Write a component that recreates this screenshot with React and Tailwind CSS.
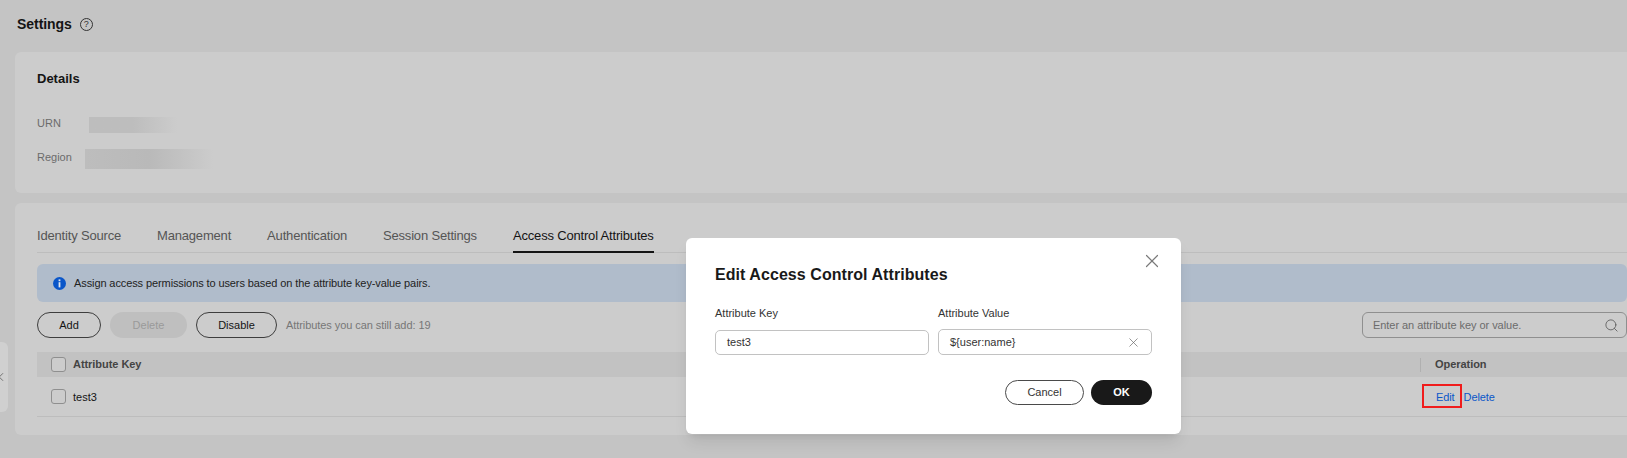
import { Search, X, ChevronLeft } from "lucide-react";

const tabs = ["Identity Source", "Management", "Authentication", "Session Settings"];

function Checkbox() {
  return <span className="w-[15px] h-[15px] rounded-[3px] border border-[#8f8f8f] bg-[#cccccc]" />;
}

function PillButton({ children, className }) {
  return (
    <button className={`h-[26px] rounded-full border border-[#3d3d3d] text-[11px] text-[#141414] ${className}`}>
      {children}
    </button>
  );
}

function InfoIcon() {
  return (
    <svg width="13" height="13" viewBox="0 0 13 13">
      <circle cx="6.5" cy="6.5" r="6.5" fill="#0a56c9" />
      <rect x="5.6" y="2.4" width="1.8" height="1.8" fill="#dfe6ef" />
      <rect x="5.6" y="5.2" width="1.8" height="5.2" fill="#dfe6ef" />
    </svg>
  );
}

function EditDialog() {
  return (
    <div className="absolute left-[686px] top-[238px] w-[495px] h-[196px] bg-white rounded-[6px] px-[29px] pt-[28px] shadow-lg">
      <button className="absolute right-[18px] top-[12px] text-[#7a7a7a]">
        <X size={22} strokeWidth={1.3} />
      </button>
      <h3 className="text-base leading-[18px] font-bold text-[#191919] tracking-[0.06px]">Edit Access Control Attributes</h3>
      <div className="flex gap-[9px] mt-[22px]">
        <div className="w-[214px]">
          <div className="text-[11px] leading-[14px] text-[#333333]">Attribute Key</div>
          <div className="mt-[10px] h-[25px] flex items-center pl-[11px] pr-[12px] border border-[#c2c2c2] rounded-[5px] text-[11px] text-[#333333]">
            test3
          </div>
        </div>
        <div className="w-[214px]">
          <div className="text-[11px] leading-[14px] text-[#333333]">Attribute Value</div>
          <div className="mt-[9px] h-[26px] flex items-center justify-between pl-[11px] pr-[10px] border border-[#c2c2c2] rounded-[5px] text-[11px] text-[#333333]">
            <span>{"${user:name}"}</span>
            <X size={15} strokeWidth={1.1} className="text-[#666666]" />
          </div>
        </div>
      </div>
      <div className="flex justify-end gap-[7px] mt-[25px]">
        <button className="w-[79px] h-[25px] rounded-full border border-[#4a4a4a] text-[11px] text-[#333333]">Cancel</button>
        <button className="w-[61px] h-[25px] rounded-full bg-[#191919] text-[11px] font-bold text-white">OK</button>
      </div>
    </div>
  );
}

export default function App() {
  return (
    <div className="relative w-[1627px] h-[458px] overflow-hidden bg-[#c4c4c4] font-['Liberation_Sans',Arial,sans-serif] text-[#141414]">
      <div className="pl-[17px] h-[52px] pt-[16px] flex items-start gap-[8px]">
        <span className="text-sm leading-4 font-bold tracking-[-0.05px]">Settings</span>
        <span className="mt-[2px] w-[13px] h-[13px] rounded-full border border-[#333333] flex items-center justify-center text-[9px] leading-none text-[#333333]">?</span>
      </div>

      {/* Details */}
      <div className="ml-[15px] w-[1640px] h-[141px] bg-[#cccccc] rounded-[6px] pl-[22px] pt-[19px]">
        <div className="text-[13px] leading-[16px] font-bold">Details</div>
        <div className="flex items-center mt-[30px] h-[16px]">
          <span className="w-[52px] text-[11px] leading-[12px] -mt-[4px] text-[#6b6b6b]">URN</span>
          <span className="w-[88px] h-[16px] bg-gradient-to-r from-[#bdbdbd] via-[#bdbdbd] to-[#cccccc]" />
        </div>
        <div className="flex items-center mt-[16px] h-[20px]">
          <span className="w-[48px] text-[11px] leading-[12px] -mt-[4px] text-[#6b6b6b]">Region</span>
          <span className="w-[128px] h-[20px] bg-gradient-to-r from-[#bdbdbd] via-[#b9b9b9] to-[#cccccc]" />
        </div>
      </div>

      {/* Tabs and table */}
      <div className="ml-[15px] mt-[10px] w-[1640px] h-[232px] bg-[#cccccc] rounded-[6px] pl-[22px] pr-[28px] pt-[20px]">
        <div className="flex h-[30px] border-b border-[#bdbdbd] text-[13px] text-[#555555]">
          {tabs.map((tab) => (
            <span key={tab} className="mr-[36px] leading-[26px] tracking-[-0.18px]">{tab}</span>
          ))}
          <span className="h-[30px] leading-[26px] tracking-[-0.18px] text-[#141414] border-b-2 border-[#141414]">
            Access Control Attributes
          </span>
        </div>

        <div className="mt-[11px] h-[38px] bg-[#b0bccb] rounded-[6px] flex items-center pl-[16px] gap-[8px] text-[11px] text-[#222222]">
          <InfoIcon />
          <span className="tracking-[-0.1px]">Assign access permissions to users based on the attribute key-value pairs.</span>
        </div>

        <div className="mt-[10px] flex items-center">
          <PillButton className="w-[64px]">Add</PillButton>
          <button className="ml-[9px] w-[77px] h-[26px] rounded-full bg-[#bfbfbf] text-[11px] text-[#9a9a9a]">Delete</button>
          <PillButton className="ml-[9px] w-[81px]">Disable</PillButton>
          <span className="ml-[9px] text-[11px] text-[#777777] tracking-[-0.07px]">Attributes you can still add: 19</span>
          <div className="ml-auto w-[265px] h-[26px] border border-[#8f8f8f] rounded-[6px] flex items-center justify-between pl-[10px] pr-[7px] text-[11px] text-[#6b6b6b]">
            <span className="tracking-[-0.05px]">Enter an attribute key or value.</span>
            <Search size={15} strokeWidth={1.3} className="text-[#555555]" />
          </div>
        </div>

        <div className="mt-[14px] h-[25px] bg-[#c2c2c2] flex items-center pl-[14px] text-[11px] font-bold text-[#444444]">
          <Checkbox />
          <span className="ml-[7px] tracking-[-0.05px]">Attribute Key</span>
          <span className="ml-auto w-px h-[14px] bg-[#b0b0b0]" />
          <span className="ml-[14px] w-[192px] tracking-[-0.05px]">Operation</span>
        </div>
        <div className="h-[40px] border-b border-[#bdbdbd] flex items-center pl-[14px] text-[11px]">
          <Checkbox />
          <span className="ml-[7px] mt-[2px]">test3</span>
          <span className="ml-auto w-[191px] mt-[2px] text-[#0a56c9] tracking-[-0.1px]">
            Edit<span className="ml-[9px]">Delete</span>
          </span>
        </div>
      </div>

      {/* Collapse handle */}
      <div className="absolute left-0 top-[342px] w-[8px] h-[70px] bg-[#d0d0d0] rounded-r-[6px] flex items-center overflow-hidden">
        <ChevronLeft size={14} strokeWidth={1.5} className="-ml-[6px] shrink-0 text-[#666666]" />
      </div>

      {/* Highlight around Edit */}
      <div className="absolute left-[1422px] top-[384px] w-[40px] h-[24px] border-2 border-[#f01c1c]" />

      <EditDialog />
    </div>
  );
}
